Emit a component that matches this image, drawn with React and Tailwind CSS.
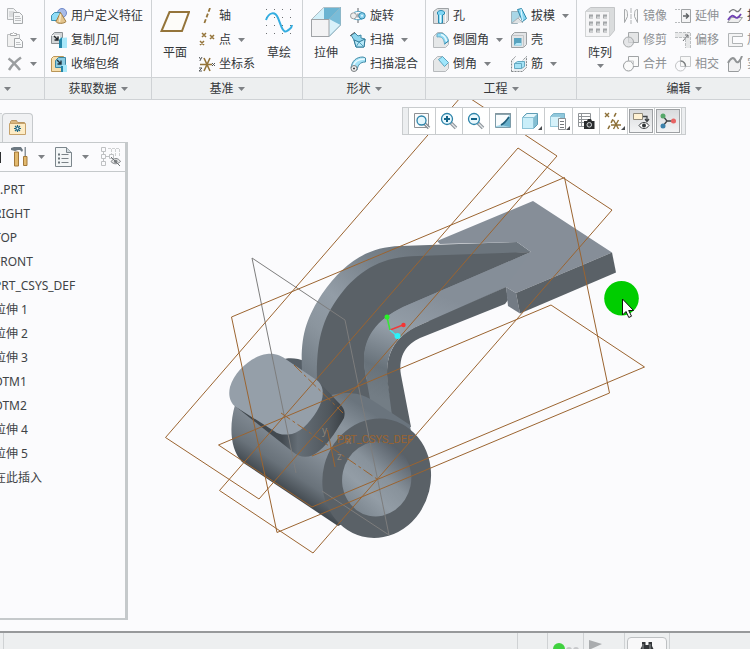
import React from "react";

function Caret({ className = "" }) {
  return (
    <svg viewBox="0 0 7 4" className={`h-1 w-[7px] shrink-0 ${className}`} aria-hidden="true">
      <path d="M0 0h7L3.500 4z" fill="#7e8185" />
    </svg>
  );
}

function Icon({ size = 16, children, className = "" }) {
  return (
    <svg width={size} height={size} viewBox={`0 0 ${size} ${size}`} fill="none" className={`shrink-0 ${className}`} aria-hidden="true">
      {children}
    </svg>
  );
}

const icons = {
  copy: (
    <Icon>
      <path d="M.5.500h6l3 3v8h-9z" fill="#f2f3f4" stroke="#b4b7b9" />
      <path d="M2 4h5M2 6h5M2 8h5" stroke="#c4c6c8" />
      <path d="M6.500 4.500h6l3 3v8h-9z" fill="#f6f7f8" stroke="#a6a9ab" />
      <path d="M8 8.500h5M8 10.500h6M8 12.500h6" stroke="#bfc1c3" />
    </Icon>
  ),
  paste: (
    <Icon>
      <path d="M.5 2.500h12v12H.5z" fill="#f1f1f1" stroke="#bcbec0" />
      <path d="M3.500 3.500v-2h2l1-1 1 1h2v2z" fill="#fff" stroke="#a9abad" />
      <path d="M7.500 6.500h5l3 3v6h-8z" fill="#f8f9fa" stroke="#a2a5a8" />
      <path d="M9 10.500h4M9 12.500h5" stroke="#c0c2c4" />
    </Icon>
  ),
  remove: (
    <Icon>
      <path d="M1.500 2.500C5 5 9 9 13 14M14 1.500C9 5 5 9 2 14" stroke="#9b9ea0" strokeWidth="2.500" />
    </Icon>
  ),
  udf: (
    <Icon>
      <circle cx="11" cy="5" r="4.500" fill="#a9bce8" stroke="#6f88c9" />
      <path d="M.5 7.500l3-3h6v6l-3 2h-6z" fill="#8fdcf6" stroke="#3d8fb0" />
      <path d="M9.500 4.500l5.500 9c-2 2.500-9 2.500-10 0z" fill="#e3c48d" stroke="#a27e43" />
      <path d="M9.500 6l-1 8" stroke="#f8e9c6" strokeWidth="1.500" />
    </Icon>
  ),
  copyGeom: (
    <Icon>
      <path d="M.5 3.500l3-3h8v8l-3 3h-8z" fill="#d3d6d8" stroke="#8b9094" />
      <path d="M.5 3.500h8v8" stroke="#f8f8f8" />
      <path d="M3 4l4 4M7 4.500V8H3.500" stroke="#25292c" strokeWidth="1.400" />
      <path d="M9 6l7-.5V16H8V8z" fill="#a7e7fa" />
      <path d="M8 8l3-3v11H8z" fill="#2386a9" />
    </Icon>
  ),
  shrink: (
    <Icon>
      <path d="M.5 2.500l2-2h10v12l-2 3H.5z" fill="#f7dfae" stroke="#b99557" />
      <path d="M4.500 4.500l3-3h7v7l-3 3h-7z" fill="#8acbe2" stroke="#3b88a5" />
      <path d="M6 4l4 4M10 4.500V8H6.500" stroke="#23353e" strokeWidth="1.400" />
      <path d="M11 9h5v7h-6z" fill="#a9e9fa" />
      <path d="M10 10h2v6h-2z" fill="#2484a7" />
    </Icon>
  ),
  plane: (
    <Icon size={30}>
      <path d="M9.500 5H29l-7 19H1.500z" fill="#fdfcf9" stroke="#94743a" strokeWidth="2" />
    </Icon>
  ),
  axis: (
    <Icon>
      <path d="M11 0L5 16" stroke="#94743a" strokeWidth="1.800" strokeDasharray="4 2" />
    </Icon>
  ),
  point: (
    <Icon>
      <path d="M3 1l4 4M7 1L3 5M11 3l4 4M15 3l-4 4M1 9l4 4M5 9l-4 4" stroke="#94743a" strokeWidth="1.500" />
    </Icon>
  ),
  csys: (
    <Icon>
      <path d="M1 8.500h12M5 2l6 13M11 2L5 15" stroke="#94743a" strokeWidth="1.600" />
      <path d="M0 1l1.500 2M3 1L.8 5M0 12h3l-3 3h3M13 7l3 3M16 7l-3 3" stroke="#55585b" />
    </Icon>
  ),
  sketch: (
    <Icon size={30}>
      <path d="M2 2.500h27M2 10.500h27M2 18.500h27M2 26.500h27" stroke="#6d7073" strokeDasharray="1 7" />
      <path d="M2 13C5 5 11 4 14 11s5 16 9 13 5-3 5-6" stroke="#33ade0" strokeWidth="2" />
    </Icon>
  ),
  extrude: (
    <Icon size={30}>
      <path d="M.5 12.500L13 .5h16.500V18L18 29.500H.5z" fill="#b7e2f3" stroke="#8b9196" />
      <path d="M13 .5h16.500L18 12.500H.5z" fill="#d2f0fa" />
      <path d="M13 1v11.500h5L29 1z" fill="#6bb4d2" />
      <path d="M29 1v17l-5-2-6-4z" fill="#79bcd8" />
      <path d="M18 29.500L29.500 18 18 12z" fill="#d9f1fa" />
      <path d="M18 12.500L29.500.5V18L18 29.500" stroke="#8db7c8" />
      <path d="M.5 12.500h17.500v17H.5z" fill="#f3f3f4" stroke="#a0a3a6" />
    </Icon>
  ),
  revolve: (
    <Icon>
      <path d="M8 0v16" stroke="#606366" strokeDasharray="4 1.500" />
      <path d="M4 4.500c3-1.500 6-1.500 8 0M4 11c3 1 6 1 8 0" stroke="#56a9cb" />
      <circle cx="3.500" cy="7.800" r="3" fill="#eee" stroke="#989b9e" />
      <circle cx="12" cy="7.800" r="3.200" fill="#86cfec" stroke="#3288ab" />
      <circle cx="12" cy="7.800" r="1" fill="#dff6ff" />
    </Icon>
  ),
  sweep: (
    <Icon>
      <path d="M1 3l4-2 3 3 3-1v3l4 1-1 8H6L4 8z" fill="#8fd5ed" stroke="#4089a5" />
      <path d="M4 8l5 2 6-3-1 8H6z" fill="#b9e9f8" stroke="#2f7897" />
      <path d="M9 10l5 5M9 10l-3 5" stroke="#4c9cba" />
      <path d="M0 4l5-4" stroke="#5b5f62" />
    </Icon>
  ),
  sweepBlend: (
    <Icon>
      <path d="M1 12C2 5 6 1 13 1l2.500 1v4C10 6 8 9 7 14z" fill="#a4e2f6" stroke="#438ba7" />
      <path d="M3 11C4 6 8 3 15 3" stroke="#eafaff" strokeWidth="1.500" />
      <circle cx="4" cy="12.500" r="3" fill="#eee" stroke="#7b7f82" />
      <path d="M3 12.500h2M4 11.500v2" stroke="#444" />
    </Icon>
  ),
  hole: (
    <Icon>
      <path d="M.5 3.500l4-3h11v12l-3 3H.5z" fill="#dcdfe1" stroke="#9ea2a5" />
      <path d="M12.500 4v11.500" stroke="#fafafa" />
      <path d="M5.500 15V7l-1-1V4c2-2 5-2 7 0v2l-2 1v8z" fill="#80d7f6" stroke="#2789af" />
      <path d="M7.500 7v8" stroke="#e0f8ff" strokeWidth="1.500" />
    </Icon>
  ),
  round: (
    <Icon>
      <path d="M.5 4.500l4-4h5l6 7v5l-3 3H.5z" fill="#e5e7e8" stroke="#b6b9bc" />
      <path d="M4 2c4-2 10-.5 11.500 7l-4 3C11 7 9 4 4 5z" fill="#8fdcf7" stroke="#69acc6" />
      <path d="M8 2.500c3 1 5 4 5.500 7" stroke="#e5f9ff" strokeWidth="1.500" />
      <path d="M15.500 9l-4 3" stroke="#2f89ac" />
    </Icon>
  ),
  chamfer: (
    <Icon>
      <path d="M.5 4.500l4-4h5l6 7v5l-3 3H.5z" fill="#e5e7e8" stroke="#b6b9bc" />
      <path d="M5.500 3.500l4-3 6 6-4 4z" fill="#9fe6fb" stroke="#5aa3bf" />
    </Icon>
  ),
  draft: (
    <Icon>
      <path d="M.5 3.500h9l-3 12h-6z" fill="#a9d6e6" stroke="#9fb3bc" />
      <path d="M1 15l6-5 5 5" fill="#dfe2e4" stroke="#adb1b4" />
      <path d="M6.500 1.500l4-1 5 10-4 3z" fill="#88d7f3" stroke="#2d86a9" />
      <path d="M10 1l1.500 12" stroke="#e5f9ff" />
    </Icon>
  ),
  shell: (
    <Icon>
      <path d="M.5 3.500l3-3h12v12l-3 3H.5z" fill="#e3e5e7" stroke="#9ca0a3" />
      <path d="M.5 3.500h12v12" stroke="#c2c5c7" />
      <path d="M3 6h7.500v7.500H3z" fill="#58a3bf" />
      <path d="M3 13.500l2.500-2.500h5v2.500z" fill="#b2e7f8" />
    </Icon>
  ),
  rib: (
    <Icon>
      <path d="M.5 15.500v-11l4-4M.5 15.500h11l4-4V.5l-4 4" fill="#eceef0" stroke="#85898c" strokeDasharray="2 1" />
      <path d="M3.500 7.500l3-2h7v5l-3 2h-7z" fill="#a6e3f6" stroke="#65a9c2" />
      <path d="M3.500 7.500h7v5" stroke="#65a9c2" />
    </Icon>
  ),
  pattern: (
    <Icon size={30}>
      <path d="M.5 4.500l5-4h24v23l-5 6H.5z" fill="#dadcdd" stroke="#c3c5c7" />
      <path d="M.5 4.500h24v25H.5z" fill="#f5f5f6" stroke="#d2d4d5" />
      <path d="M4 9.500h18M4 16.500h18M4 23.500h18" stroke="#a3a6a8" strokeWidth="4" strokeDasharray="4 3" />
      <path d="M5 10.500h17M5 17.500h17M5 24.500h17" stroke="#d0d2d3" strokeWidth="2" strokeDasharray="3 4" />
    </Icon>
  ),
  mirror: (
    <Icon>
      <path d="M8 0v16" stroke="#b0b3b5" strokeDasharray="5 1" />
      <path d="M1.500 1.500c3 0 3 3 3 7l-3 6zM14.500 1.500c-3 0-3 3-3 7l3 6z" stroke="#a6a9ab" fill="#f6f6f6" />
    </Icon>
  ),
  trim: (
    <Icon>
      <path d="M5.500.5h10v10h-10z" fill="#e4e5e6" stroke="#a5a8aa" />
      <circle cx="5.500" cy="10" r="5" fill="#dcddde" fillOpacity=".7" stroke="#a5a8aa" />
    </Icon>
  ),
  merge: (
    <Icon>
      <path d="M5.500.5h10v10h-10z" fill="#fafafa" stroke="#a0a3a5" />
      <circle cx="5.500" cy="10" r="5" fill="#fafafa" stroke="#989b9d" />
      <path d="M5.500 5h5v5" stroke="#c8cacc" />
    </Icon>
  ),
  extend: (
    <Icon>
      <path d="M0 1.500h6M0 14.500h6" stroke="#b8bbbd" strokeDasharray="2 1" />
      <path d="M6.500 1.500h9v13h-9z" fill="#f4f4f5" stroke="#a0a3a5" />
      <path d="M8 8h5M11 5.500L13.500 8 11 10.500" stroke="#5f6265" strokeWidth="1.500" />
    </Icon>
  ),
  offset: (
    <Icon>
      <path d="M0 .500h15.500V16h-5V5.500H0z" fill="#e7e8e9" />
      <path d="M0 .5h15.500V16M0 5.500h10.500V16" stroke="#bcbfc1" strokeDasharray="3 1" />
      <path d="M8 9l5-6M10 3h3v3" stroke="#707376" />
    </Icon>
  ),
  intersect: (
    <Icon>
      <path d="M5.500.5h10v10h-10z" fill="#f8f8f8" stroke="#c6c8ca" />
      <circle cx="5.500" cy="10" r="5" stroke="#c1c3c5" />
      <path d="M5.500 5A5 5 0 0110.500 10.500" stroke="#7d8082" strokeWidth="1.500" />
    </Icon>
  ),
  project: (
    <Icon>
      <path d="M2 4.500C5 1 7 1 9 3s4-1 5-3" stroke="#77797c" strokeWidth="1.300" />
      <path d="M.5 14.500l4-5h11l-4 5z" fill="#eee" stroke="#9c9fa1" />
      <path d="M1 12c3-5 5-5 7-3s4 0 6-3" stroke="#7042b5" strokeWidth="1.800" />
    </Icon>
  ),
  thicken: (
    <Icon>
      <path d="M15.500 1.500H1.500v13h14v-3h-10v-7h10z" fill="#f4f4f5" stroke="#b1b4b6" />
    </Icon>
  ),
  solidify: (
    <Icon>
      <path d="M1.500 15.500v-9c3-6 6-5 7-2s4 2 5-2v10l-2 3z" fill="#f1f1f2" stroke="#989b9d" />
      <path d="M1 7c3-6 6-6 7.500-2.500S13 6 15 0" stroke="#929597" strokeWidth="2" />
    </Icon>
  ),
};

function Tool({ icon, label, caret, muted }) {
  return (
    <button type="button" aria-label={label || icon} className={`flex h-6 items-center text-left ${muted ? "text-[#8d9093]" : "text-[#34373a]"}`}>
      {icons[icon]}
      {label && <span className="ml-1">{label}</span>}
      {caret && <Caret className="ml-[7px]" />}
    </button>
  );
}

function BigTool({ icon, label, caret }) {
  return (
    <button type="button" className="flex w-[30px] shrink-0 flex-col items-center self-start pt-[3px]">
      {icons[icon]}
      <span className="mt-2 leading-4">{label}</span>
      {caret && <Caret className="mt-[3px]" />}
    </button>
  );
}

function Column({ children }) {
  return <div className="flex shrink-0 flex-col items-start">{children}</div>;
}

function Group({ title, body, children }) {
  return (
    <section className="flex shrink-0 flex-col border-r border-[#cfd2d5]">
      <div className={`flex h-[77px] pt-1 ${body}`}>{children}</div>
      <button
        type="button"
        aria-label={title || "操作"}
        className={`flex h-[22px] items-center border-t border-[#cfd2d5] bg-[#edeff0] ${title ? "justify-center" : "pl-1"}`}
      >
        {title}
        <Caret className={title ? "ml-1" : ""} />
      </button>
    </section>
  );
}

function Ribbon() {
  return (
    <header className="flex h-[100px] shrink-0 overflow-hidden border-b border-[#cfd2d5]">
      <Group body="px-[7px]">
        <Column>
          <Tool icon="copy" />
          <Tool icon="paste" caret />
          <Tool icon="remove" caret />
        </Column>
      </Group>
      <Group title="获取数据" body="pl-1.5 pr-2">
        <Column>
          <Tool icon="udf" label="用户定义特征" />
          <Tool icon="copyGeom" label="复制几何" />
          <Tool icon="shrink" label="收缩包络" />
        </Column>
      </Group>
      <Group title="基准" body="gap-[9px] px-2">
        <BigTool icon="plane" label="平面" />
        <Column>
          <Tool icon="axis" label="轴" />
          <Tool icon="point" label="点" caret />
          <Tool icon="csys" label="坐标系" />
        </Column>
        <BigTool icon="sketch" label="草绘" />
      </Group>
      <Group title="形状" body="gap-[9px] pl-2 pr-[7px]">
        <BigTool icon="extrude" label="拉伸" />
        <Column>
          <Tool icon="revolve" label="旋转" />
          <Tool icon="sweep" label="扫描" caret />
          <Tool icon="sweepBlend" label="扫描混合" />
        </Column>
      </Group>
      <Group title="工程" body="gap-2 pl-[7px] pr-[7px]">
        <Column>
          <Tool icon="hole" label="孔" />
          <Tool icon="round" label="倒圆角" caret />
          <Tool icon="chamfer" label="倒角" caret />
        </Column>
        <Column>
          <Tool icon="draft" label="拔模" caret />
          <Tool icon="shell" label="壳" />
          <Tool icon="rib" label="筋" caret />
        </Column>
      </Group>
      <Group title="编辑" body="gap-2 px-2">
        <BigTool icon="pattern" label="阵列" caret />
        <Column>
          <Tool icon="mirror" label="镜像" muted />
          <Tool icon="trim" label="修剪" muted />
          <Tool icon="merge" label="合并" muted />
        </Column>
        <Column>
          <Tool icon="extend" label="延伸" muted />
          <Tool icon="offset" label="偏移" muted />
          <Tool icon="intersect" label="相交" muted />
        </Column>
        <Column>
          <Tool icon="project" label="投影" />
          <Tool icon="thicken" label="加厚" muted />
          <Tool icon="solidify" label="实体化" muted />
        </Column>
      </Group>
    </header>
  );
}

const treeItems = ["RIGHT", "TOP", "FRONT", "PRT_CSYS_DEF", "拉伸 1", "拉伸 2", "拉伸 3", "DTM1", "DTM2", "拉伸 4", "拉伸 5", "在此插入"];

function ModelTree() {
  return (
    <aside className="mb-[11px] flex w-32 shrink-0 flex-col pt-[13px]">
      <div className="flex h-[29px]">
        <div className="w-[2px] border-t border-[#cfd2d5] bg-[#edeff0]" />
        <button type="button" aria-label="文件夹" className="flex w-[31px] items-center justify-center rounded-t-sm border border-b-0 border-[#c6c9cc] bg-[#f0f1f3]">
          <svg width="17" height="16" viewBox="0 0 17 16" aria-hidden="true">
            <path d="M1.500 14.500v-13l1-1h5l1 2h7v12z" fill="#d9b77f" stroke="#b99662" />
            <path d="M.5 3.500h16v11H.5z" fill="#fdecc6" stroke="#c6a26b" />
            <path d="M8.500 5v7M5 8.500h7M6 6l5 5M11 6l-5 5" stroke="#1c6785" strokeWidth="1.200" />
            <circle cx="8.500" cy="8.500" r="1" fill="#fff" />
          </svg>
        </button>
      </div>
      <div className="flex-1 overflow-hidden border-b-2 border-r-[3px] border-t border-[#c5c9cb]">
        <div className="flex h-[29px] items-center gap-[10px] border-b border-[#c5c9cb] pr-1">
          <div className="h-[11px] w-px bg-[#2d2f31]" />
          <button type="button" aria-label="设置">
            <svg width="17" height="20" viewBox="0 0 17 20" className="block" aria-hidden="true">
              <path d="M0 1l3-1h7l2 3-1 2-2-2H7L4 4 0 3z" fill="#6c7881" />
              <path d="M3.500 5h4v14h-4z" fill="#e2b96e" stroke="#a2783a" />
              <path d="M13.500 0h1.500v10h-1.500z" fill="#8b949b" />
              <path d="M12.500 9.500h3.500v9h-3.500z" fill="#e2b96e" stroke="#a2783a" />
            </svg>
          </button>
          <Caret />
          <button type="button" aria-label="显示">
            <svg width="17" height="20" viewBox="0 0 17 20" fill="none" className="block" aria-hidden="true">
              <path d="M.5.5h11l5 5v14H.5z" fill="#f3f6f7" stroke="#7c868c" />
              <path d="M11.500.5v5h5" fill="#d1dade" stroke="#7c868c" />
              <path d="M6.500 7.500h7M6.500 11.500h7M6.500 15.500h7" stroke="#7b8388" />
              <path d="M3 6.500h2v2h-2zM3 10.500h2v2h-2zM3 14.500h2v2h-2z" fill="#6c757b" />
            </svg>
          </button>
          <Caret />
          <button type="button" aria-label="隐藏" className="ml-auto">
            <svg width="20" height="20" viewBox="0 0 20 20" fill="none" className="block" aria-hidden="true">
              <path d="M.5.5h4v4h-4zM.5 7.500h4v4h-4zM.5 14.500h4v4h-4zM8.500 7.500h4v4h-4zM2.500 4.500v3M2.500 11.500v3M4.500 9.500h4" stroke="#bfc1c3" />
              <path d="M7 1.500h11M10.500 2v5M14.500 2v7M18.500 2v7" stroke="#cfd1d2" strokeDasharray="3 1" />
              <path d="M10 14.500c3-4 7-4 9.500 0-3 3-7 3-9.500 0z" fill="#e5e6e7" stroke="#808386" />
              <circle cx="14.700" cy="14.500" r="1.800" fill="#808386" />
              <path d="M10 10l9 9" stroke="#707376" />
            </svg>
          </button>
        </div>
        <ul className="pt-1.5 text-[#404346]">
          <li className="h-6 leading-6">.PRT</li>
          {treeItems.map((item) => (
            <li key={item} className="-ml-1.5 h-6 leading-6">
              {item}
            </li>
          ))}
        </ul>
      </div>
    </aside>
  );
}

function Magnifier({ sign }) {
  return (
    <Icon size={18}>
      <path d="M11 11l5 5" stroke="#8e969c" strokeWidth="3.500" />
      <path d="M11.500 11.500l4.500 4.500" stroke="#e4e7e9" strokeWidth="1.200" />
      <circle cx="7" cy="7" r="5.500" fill="#eaf8fd" stroke="#2c83a9" strokeWidth="1.300" />
      {sign && <path d={sign} stroke="#146489" strokeWidth="2" />}
    </Icon>
  );
}

const viewTools = [
  {
    label: "重新调整",
    icon: (
      <Icon size={18}>
        <path d="M1.500 1.500h14v14h-14z" fill="#fbfbfb" stroke="#8e9194" />
        <path d="M11.500 11.500l4.500 4.500" stroke="#8e969c" strokeWidth="3.500" />
        <path d="M12 12l4 4" stroke="#e4e7e9" />
        <circle cx="8.500" cy="8.500" r="4.500" fill="#e5f7fd" stroke="#2c83a9" strokeWidth="1.300" />
      </Icon>
    ),
  },
  { label: "放大", icon: <Magnifier sign="M7 4v6M4 7h6" /> },
  { label: "缩小", icon: <Magnifier sign="M4 7h6" /> },
  {
    label: "重画",
    icon: (
      <Icon size={18}>
        <path d="M1.500 1.500h15v14h-15z" fill="#a5d6e8" stroke="#7d9ba8" />
        <path d="M2 3h13C13 9 9 13 2 14z" fill="#f9fcfd" />
        <path d="M16 5c-2 4-5 7-9 8l9 2z" fill="#67afca" />
        <path d="M1 2h16" stroke="#84959d" strokeWidth="1.500" />
        <path d="M15 5c-2 3-4 6-8 8" stroke="#205f7c" strokeWidth="1.800" />
      </Icon>
    ),
  },
  {
    label: "显示样式",
    menu: true,
    icon: (
      <Icon size={18}>
        <path d="M1.500 5.500l4-4h11v11l-4 4h-11z" fill="#83bed2" stroke="#5f9db5" />
        <path d="M2 5.500l4-3.500h10l-3.500 3.500z" fill="#e5f7fc" />
        <path d="M1.500 5.500h11v11h-11z" fill="#c9eef9" stroke="#8cc3d7" />
      </Icon>
    ),
  },
  {
    label: "已保存方向",
    menu: true,
    icon: (
      <Icon size={18}>
        <path d="M1.500 4.500l3-3h11v9l-4 4h-10z" fill="#8fc8dc" stroke="#7ab2c7" />
        <path d="M1.500 4.500h10v10h-10z" fill="#d6f2fa" stroke="#98c9da" />
        <path d="M9.500 6.500h7v11h-7z" fill="#fff" stroke="#8b8f92" />
        <path d="M11 9.500h4M11 12.500h4M11 15.500h4" stroke="#74787b" />
      </Icon>
    ),
  },
  {
    label: "视图管理器",
    icon: (
      <Icon size={18}>
        <path d="M1.500 1.500h12v13h-12zM4.500 1.500v13M1.500 4.500h12M1.500 7.500h12M1.500 10.500h12" fill="#fff" stroke="#909497" />
        <path d="M7 9h3l1-2h3l1 2h2.500v8H7z" fill="#292c2e" />
        <circle cx="12.300" cy="12.800" r="2.300" fill="#3b3e40" stroke="#d0d3d5" />
      </Icon>
    ),
  },
  {
    label: "基准显示",
    menu: true,
    icon: (
      <Icon size={18}>
        <path d="M1 1l4 4M5 1L1 5M7 13h10M9.500 8l5 9M14.500 8l-5 9" stroke="#8d7038" strokeWidth="1.400" />
        <path d="M12 1L4 17" stroke="#8d7038" strokeWidth="1.600" strokeDasharray="4 3" />
      </Icon>
    ),
  },
  {
    label: "注释显示",
    pressed: true,
    icon: (
      <Icon size={18}>
        <path d="M1.500 1.500h9v6h-9z" fill="#fff2d3" stroke="#928b7b" />
        <path d="M11 4.500h4V9M13 7l2 2.500L17 7" stroke="#3f4346" strokeWidth="1.300" />
        <path d="M7 13.500c2.500-4 7.500-4 10 0-2.500 4-7.500 4-10 0z" fill="#fff" stroke="#3f4346" />
        <circle cx="12" cy="13.500" r="2" fill="#303436" />
      </Icon>
    ),
  },
  {
    label: "旋转中心",
    pressed: true,
    icon: (
      <Icon size={18}>
        <path d="M4 4l4 5-4 5M8 9h6" stroke="#3f4346" strokeWidth="1.300" />
        <circle cx="4" cy="4" r="2.500" fill="#56a86a" />
        <circle cx="4" cy="14" r="2.500" fill="#3c82ab" />
        <circle cx="14.500" cy="9" r="2.500" fill="#e76464" />
      </Icon>
    ),
  },
];

function ViewToolbar() {
  return (
    <div role="toolbar" className="absolute right-16 top-[7px] flex h-7 border border-[#c9ccce] bg-white">
      <div className="w-[5px] bg-[#eceef0]" />
      {viewTools.map((t) => (
        <button
          key={t.label}
          type="button"
          aria-label={t.label}
          className={`relative flex items-center justify-center border-l border-[#c9ccce] ${t.menu ? "w-7 pr-0.5" : "w-[27px] pr-px"}`}
        >
          {t.pressed ? (
            <span className="flex h-6 w-6 items-center justify-center border border-[#9da0a3] bg-gradient-to-b from-[#d9dbdd] to-[#f3f4f5]">{t.icon}</span>
          ) : (
            t.icon
          )}
          {t.menu && (
            <svg width="4" height="4" viewBox="0 0 4 4" className="absolute bottom-1 right-0.5" aria-hidden="true">
              <path d="M4 0v4H0z" fill="#4a4d50" />
            </svg>
          )}
        </button>
      ))}
      <div className="w-1 border-l border-[#c9ccce] bg-[#eceef0]" />
    </div>
  );
}

function Model() {
  return (
    <svg viewBox="128 100 622 531" preserveAspectRatio="xMinYMin meet" className="min-h-0 w-full flex-1" fill="none" role="img" aria-label="零件模型">
      <defs>
        <linearGradient id="rib" x1="420" y1="245" x2="305" y2="375" gradientUnits="userSpaceOnUse">
          <stop offset="0" stopColor="#6c757d" />
          <stop offset=".25" stopColor="#77818a" />
          <stop offset=".55" stopColor="#939da7" />
          <stop offset=".75" stopColor="#8b959e" />
          <stop offset="1" stopColor="#707a83" />
        </linearGradient>
        <linearGradient id="strip" x1="425" y1="290" x2="385" y2="400" gradientUnits="userSpaceOnUse">
          <stop offset="0" stopColor="#858e98" />
          <stop offset=".4" stopColor="#949ea8" />
          <stop offset=".75" stopColor="#68727a" />
          <stop offset="1" stopColor="#737d85" />
        </linearGradient>
        <linearGradient id="body" x1="342" y1="393" x2="279" y2="489" gradientUnits="userSpaceOnUse">
          <stop offset="0" stopColor="#6a747d" />
          <stop offset=".25" stopColor="#8b959e" />
          <stop offset=".55" stopColor="#868f98" />
          <stop offset=".82" stopColor="#69727a" />
          <stop offset="1" stopColor="#3e454b" />
        </linearGradient>
        <linearGradient id="bore" x1="396" y1="448" x2="360" y2="512" gradientUnits="userSpaceOnUse">
          <stop offset="0" stopColor="#586069" />
          <stop offset=".4" stopColor="#88929b" />
          <stop offset=".7" stopColor="#939da6" />
          <stop offset="1" stopColor="#7d8790" />
        </linearGradient>
        <linearGradient id="knob" x1="240" y1="410" x2="345" y2="410" gradientUnits="userSpaceOnUse">
          <stop offset="0" stopColor="#40474c" />
          <stop offset=".4" stopColor="#434a50" />
          <stop offset=".55" stopColor="#656e76" />
          <stop offset=".85" stopColor="#50575d" />
          <stop offset="1" stopColor="#3a4045" />
        </linearGradient>
      </defs>

      <path d="M280 360C289 357 297 358 305 361L330 390 300 400z" fill="#555e66" />
      <path d="M303 385C299 340 304 322 322 294C343 264 366 247 400 246L517 242 531 252 440 258 350 400 317 398z" fill="url(#rib)" />
      <path d="M440 244L437 241 533 201 612 252.500 516 293 506 287 430 322 400 306 531 252 517 242z" fill="#868e98" />
      <path d="M531 252L418 256C383 256 361 270 344 290C323 316 316 338 317 382L345 410 375 410 366 376C360 350 368 324 403 307z" fill="#5a6167" />
      <path d="M531 252L403 307C370 323 359 345 366 377L372 410 394 420 388 383C384 352 396 336 420 325L506 287z" fill="url(#strip)" />
      <path d="M506 287L420 325C393 337 384 356 388 385L393 423 411 427 401 375C398 355 407 344 420 338L505 304 508 300z" fill="#5a6167" />
      <path d="M506 287L516 293 520 313.500 508 306z" fill="#737b84" />
      <path d="M516 293L612 252.500 616 272.500 520 313.500z" fill="#5a6167" />

      <path d="M235 405C229 426 230 449 242 462L338 526 395 500 412 440 410 425 372 400C357 391 342 392 328 396z" fill="url(#body)" />
      <ellipse cx="376.700" cy="478.300" rx="54" ry="60" transform="rotate(14 376.700 478.300)" fill="#5a6167" />
      <ellipse cx="376.700" cy="479" rx="34.500" ry="37.500" transform="rotate(12 376.700 479)" fill="url(#bore)" />

      <path d="M235 406L293 452C300 458 310 459 319 451C330 442 338 428 344 418C346 410 343 407 337 401L320 383z" fill="url(#knob)" />
      <path d="M267 354C275 353 282 356 287 360L318 381C326 389 323 401 317 411C309 424 299 434 288 434.500C282 435 278 434 274 431L236 407C230 403 228 395 230 387C235 370 252 356 267 354z" fill="#959fa9" />

      <g stroke="#7d7d7d" strokeWidth="1">
        <path d="M296 473L252 258 345 320 389 535 322 491" />
      </g>
      <g stroke="#9b6430" strokeWidth="1">
        <path d="M165.500 437.500L463.500 94 557 156 259 499z" />
        <path d="M518 148L612 210 313 553 219.500 490.500z" />
        <path d="M564.500 177.500L609.500 393 277 532.500 231.500 317z" />
        <path d="M551 305L644.500 367 312 507 218.500 445z" />
        <path d="M281 413L377 479" strokeDasharray="11 3 3 3" />
        <path d="M294 365L343 413" strokeDasharray="11 3 3 3" />
        <path d="M312 456L351 440M327.500 430L335 467" />
      </g>
      <g fontSize="10" fill="#8d8275">
        <text x="322" y="434">y</text>
        <text x="337" y="460">z</text>
        <text x="346" y="444">x</text>
      </g>
      <text x="337" y="443" fontSize="11" fill="#9b6430" className="font-['Roboto',sans-serif]">PRT_CSYS_DEF</text>

      <g strokeWidth="1.500">
        <path d="M390 330L387 317" stroke="#35e835" />
        <path d="M390 330L403 325" stroke="#f03b3b" />
        <path d="M390 330L397 336" stroke="#3ce8f0" />
      </g>
      <circle cx="387" cy="317" r="2.500" fill="#2af02a" />
      <circle cx="403.500" cy="325" r="2.200" fill="#f53333" />
      <circle cx="397.500" cy="336" r="3" fill="#2af4fa" />

      <circle cx="621.500" cy="298.300" r="17.300" fill="#00cd00" />
      <path d="M622.500 299v16l3.500-3.500 2.800 6 2.700-1.300-2.800-5.700h4.800z" fill="#fff" stroke="#111" />
    </svg>
  );
}

function StatusBar() {
  return (
    <footer className="flex h-[18px] shrink-0 overflow-hidden border-t-2 border-[#97999b] bg-[#edeff0]">
      <div className="w-1 border-r border-[#cfd2d4]" />
      <div className="flex-1" />
      <div className="w-[31px] border-x border-[#cfd2d4]" />
      <div className="flex w-9 items-start gap-px border-r border-[#cfd2d4] pl-[5px] pt-[10px]">
        <span className="h-3 w-3 shrink-0 rounded-full bg-[#3fd13f]" />
        <span className="mt-1 h-1.5 w-1.5 shrink-0 rounded-full bg-[#c6c8ca]" />
        <span className="mt-1 h-1.5 w-1.5 shrink-0 rounded-full bg-[#c6c8ca]" />
      </div>
      <div className="w-[41px] border-r border-[#cfd2d4] pl-[5px] pt-[7px]">
        <svg width="13" height="11" viewBox="0 0 13 11" aria-hidden="true">
          <path d="M0 0l13 4-11 5v2H0z" fill="#a9acae" />
        </svg>
      </div>
      <button type="button" aria-label="搜索" className="ml-0.5 mt-1 flex h-7 w-10 shrink-0 justify-center rounded-sm border border-[#bec1c3] bg-[#f8f8f9] pt-1">
        <svg width="16" height="16" viewBox="0 0 16 16" className="block" aria-hidden="true">
          <path d="M3 0h3.500v3h3V0H13v4l3 6v6h-6v-6H6v6H0v-6l3-6z" fill="#333639" />
          <path d="M4 2v5M11 2v5" stroke="#94979a" />
        </svg>
      </button>
      <div className="ml-0.5 w-[81px] border-l border-[#cfd2d4]" />
    </footer>
  );
}

export default function App() {
  return (
    <div className="flex h-screen flex-col overflow-hidden whitespace-nowrap bg-[#fbfbfd] font-['Noto_Sans','Noto_Sans_CJK_SC',sans-serif] text-xs text-[#34373a]">
      <Ribbon />
      <main className="flex min-h-0 flex-1">
        <ModelTree />
        <div className="relative flex min-w-0 flex-1 overflow-hidden">
          <Model />
          <ViewToolbar />
        </div>
      </main>
      <StatusBar />
    </div>
  );
}
